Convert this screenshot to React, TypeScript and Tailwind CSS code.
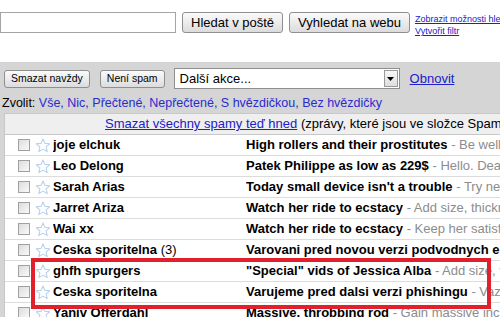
import React from 'react';

const rows = [
  { from: 'joje elchuk', subject: 'High rollers and their prostitutes', snippet: 'Be well endowed and make her happy tonight' },
  { from: 'Leo Delong', subject: 'Patek Philippe as low as 229$', snippet: 'Hello. Dear friend, we offer luxury watches' },
  { from: 'Sarah Arias', subject: "Today small device isn't a trouble", snippet: 'Try new formula now' },
  { from: 'Jarret Ariza', subject: 'Watch her ride to ecstacy', snippet: 'Add size, thickness and stamina' },
  { from: 'Wai xx', subject: 'Watch her ride to ecstacy', snippet: 'Keep her satisfied all night long' },
  { from: 'Ceska sporitelna', count: '(3)', subject: 'Varovani pred novou verzi podvodnych e-mailu', snippet: '' },
  { from: 'ghfh spurgers', subject: '"Special" vids of Jessica Alba', snippet: 'Add size, thickness' },
  { from: 'Ceska sporitelna', subject: 'Varujeme pred dalsi verzi phishingu', snippet: 'Vazeny kliente' },
  { from: 'Yaniv Offerdahl', subject: 'Massive, throbbing rod', snippet: 'Gain massive inches today' },
];

function Star() {
  return (
    <svg width="16" height="15" viewBox="0 0 16 15" className="shrink-0">
      <path
        d="M8 1 L9.9 5.4 L14.7 5.8 L11.1 8.9 L12.2 13.6 L8 11.1 L3.8 13.6 L4.9 8.9 L1.3 5.8 L6.1 5.4 Z"
        fill="#ffffff"
        stroke="#b7d0ec"
        strokeWidth="1.1"
        strokeLinejoin="round"
      />
    </svg>
  );
}

function Checkbox() {
  return <div className="w-[12px] h-[12px] shrink-0 border border-[#a0a0a0] bg-gradient-to-br from-[#dcdcdc] to-[#fafafa]" />;
}

function Btn({ children, small }: { children: React.ReactNode; small?: boolean }) {
  return (
    <div
      className={
        'flex items-center justify-center border border-[#8f8f8f] rounded-[3px] bg-gradient-to-b from-[#fbfbfb] to-[#dcdcdc] text-black whitespace-nowrap ' +
        (small ? 'h-[18px] text-[10.5px] px-[6px]' : 'h-[21px] text-[13px] px-[8px]')
      }
    >
      {children}
    </div>
  );
}

export default function App() {
  return (
    <div className="w-[500px] h-[317px] overflow-hidden relative bg-white font-['Liberation_Sans',Arial,sans-serif] text-black">
      {/* search bar */}
      <div className="h-[62px] flex items-start pt-[12px] gap-[6px]">
        <div className="w-[176px] h-[21px] border border-[#a5a5a5] bg-white shrink-0" />
        <Btn>Hledat v poště</Btn>
        <Btn>Vyhledat na webu</Btn>
        <div className="flex flex-col text-[9px] leading-[12px] text-[#2020c8] underline whitespace-nowrap pt-[1px] -ml-[1px]">
          <span>Zobrazit možnosti hledání</span>
          <span>Vytvořit filtr</span>
        </div>
      </div>

      {/* grey area */}
      <div className="bg-[#d5d5d5] h-[255px] pl-[4px]">
        <div className="flex items-center h-[29px] pt-[4px]">
          <Btn small>Smazat navždy</Btn>
          <div className="w-[10px]" />
          <Btn small>Není spam</Btn>
          <div className="w-[9px]" />
          <div className="w-[226px] h-[21px] bg-white border border-[#8e8e8e] flex items-center justify-between">
            <span className="text-[13px] pl-[5px]">Další akce...</span>
            <div className="w-[14px] h-[17px] mr-[1px] border border-[#9a9a9a] bg-gradient-to-b from-[#f8f8f8] to-[#dedede] flex items-center justify-center">
              <svg width="7" height="4" viewBox="0 0 7 4"><path d="M0 0 H7 L3.5 4 Z" fill="#000" /></svg>
            </div>
          </div>
          <span className="ml-[10px] text-[13px] text-[#2020c8] underline">Obnovit</span>
        </div>
        <div className="-ml-[2px] h-[22px] flex items-center text-[12.5px] whitespace-nowrap pt-[2px]">
          <span>Zvolit:&nbsp;</span>
          <span className="text-[#2a2ad0]">Vše, Nic, Přečtené, Nepřečtené, S hvězdičkou, Bez hvězdičky</span>
        </div>

        {/* message list */}
        <div className="bg-white border-l border-t border-[#c8c8c8]">
          <div className="h-[21px] bg-[#efefef] border-b border-[#c8c8c8] flex items-center whitespace-nowrap text-[13px] pl-[100px]">
            <span className="text-[#2020c8] underline">Smazat všechny spamy teď hned</span>
            <span>&nbsp;(zprávy, které jsou ve složce Spam víc než 30 dní)</span>
          </div>
          {rows.map((r, i) => (
            <div key={i} className="h-[21px] border-b border-[#dcdcdc] flex items-center whitespace-nowrap text-[13px]">
              <div className="w-[48px] flex items-center pl-[13px] gap-[5px] shrink-0">
                <Checkbox />
                <Star />
              </div>
              <div className="w-[193px] shrink-0 overflow-hidden">
                <span className="font-bold">{r.from}</span>
                {r.count && <span> {r.count}</span>}
              </div>
              <div className="overflow-hidden">
                <span className="font-bold">{r.subject}</span>
                {r.snippet && <span className="text-[#8c8c8c]"> - {r.snippet}</span>}
              </div>
            </div>
          ))}
        </div>
      </div>

      {/* highlight */}
      <div className="absolute left-[31px] top-[258px] w-[460px] h-[51px] border-[4px] border-[#e2202c]" />
    </div>
  );
}
